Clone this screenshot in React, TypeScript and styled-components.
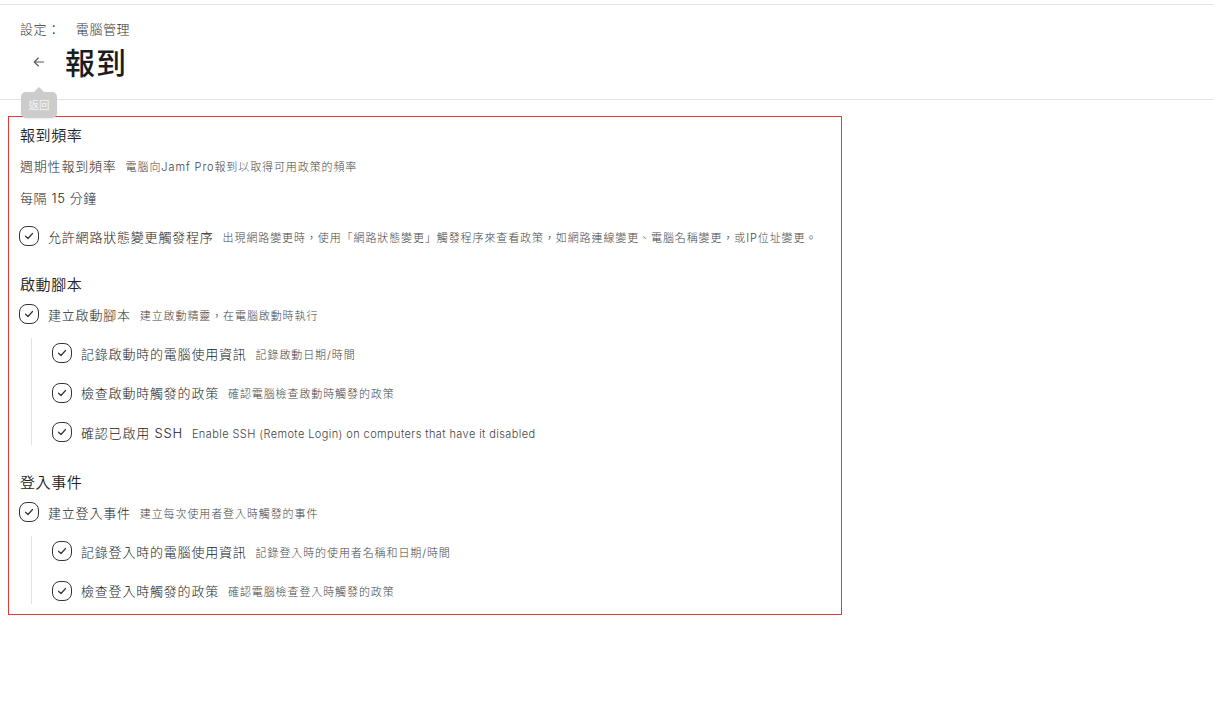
import React from "react";
import styled, { createGlobalStyle } from "styled-components";

const GlobalStyle = createGlobalStyle`
  html, body { margin: 0; padding: 0; background: #ffffff; }
  body {
    font-family: Inter, "Noto Sans CJK TC", "Noto Sans", sans-serif;
    color: #222222;
  }
  * { box-sizing: border-box; }
`;

const Page = styled.div`
  width: 1214px;
  min-height: 728px;
  padding-top: 4px;
`;

const Header = styled.header`
  border-top: 1px solid #e3e3e3;
  border-bottom: 1px solid #e3e3e3;
  padding: 15px 20px 18px;
  height: 96px;
`;

const Breadcrumb = styled.div`
  display: flex;
  align-items: center;
  gap: 15px;
  font-size: 13px;
  font-weight: 300;
  letter-spacing: 0.6px;
  line-height: 18px;
  color: #333333;
`;

const TitleRow = styled.div`
  display: flex;
  align-items: center;
  height: 40px;
  margin-top: 3px;
  gap: 14px;
  padding-left: 7px;
`;

const BackButton = styled.button`
  position: relative;
  width: 24px;
  height: 24px;
  padding: 0;
  margin-top: 2px;
  border: none;
  background: transparent;
  display: flex;
  align-items: center;
  justify-content: center;
  color: #555555;
  cursor: pointer;
`;

const Tooltip = styled.span`
  position: absolute;
  top: 42px;
  left: 50%;
  transform: translateX(-50%);
  width: 36px;
  height: 26px;
  border-radius: 5px;
  background: #cccccc;
  color: #f4f4f4;
  font-family: "Noto Sans CJK TC", sans-serif;
  font-size: 10.5px;
  line-height: 26px;
  text-align: center;
  box-shadow: 0 1px 2px rgba(0, 0, 0, 0.08);
  z-index: 2;
  &::before {
    content: "";
    position: absolute;
    top: -5px;
    left: 50%;
    margin-left: -5px;
    border-left: 5px solid transparent;
    border-right: 5px solid transparent;
    border-bottom: 5px solid #cccccc;
  }
`;

const Title = styled.h1`
  margin: 0;
  font-family: "Noto Sans CJK TC", sans-serif;
  font-size: 30px;
  font-weight: 500;
  line-height: 40px;
  color: #1c1c1c;
  letter-spacing: 1px;
`;

const Content = styled.main`
  padding: 16px 372px 0 8px;
`;

const Panel = styled.section`
  border: 1px solid #e53935;
  padding: 7px 11px 10px;
  display: flex;
  flex-direction: column;
`;

const SectionTitle = styled.h2<{ $gap?: number }>`
  margin: ${(p) => p.$gap ?? 0}px 0 0;
  font-family: "Noto Sans CJK TC", sans-serif;
  font-size: 15px;
  font-weight: 350;
  line-height: 22px;
  color: #222222;
  letter-spacing: 0.6px;
`;

const FieldLine = styled.div<{ $gap: number }>`
  margin-top: ${(p) => p.$gap}px;
  display: flex;
  align-items: baseline;
  gap: 9px;
  line-height: 20px;
`;

const Label = styled.span`
  font-size: 13px;
  font-weight: 300;
  color: #222222;
  letter-spacing: 0.8px;
`;

const Desc = styled.span<{ $latin?: boolean }>`
  font-size: 11px;
  font-weight: 300;
  color: #444444;
  letter-spacing: ${(p) => (p.$latin ? "0.4px" : "0.9px")};
`;

const Value = styled.div<{ $gap: number }>`
  margin-top: ${(p) => p.$gap}px;
  font-size: 13px;
  font-weight: 300;
  line-height: 20px;
  letter-spacing: 0.6px;
  color: #222222;
`;

const CheckRow = styled.div<{ $gap?: number }>`
  margin-top: ${(p) => p.$gap ?? 0}px;
  display: flex;
  align-items: center;
  height: 26px;
  gap: 9px;
  white-space: nowrap;
`;

const CheckBox = styled.span`
  width: 20px;
  height: 20px;
  flex: none;
  border: 1.3px solid #333333;
  border-radius: 8px;
  display: flex;
  align-items: center;
  justify-content: center;
  color: #333333;
  margin-left: -1px;
`;

const RowText = styled.span`
  display: flex;
  align-items: baseline;
  gap: 9px;
`;

const Nested = styled.div<{ $gap: number }>`
  margin: ${(p) => p.$gap}px 0 0 11px;
  padding: 2px 0 0 21px;
  border-left: 1px solid #e2e2e2;
  display: flex;
  flex-direction: column;
  gap: 13.5px;
`;

const Check = () => (
  <CheckBox>
    <svg width="10" height="8" viewBox="0 0 10 8" fill="none">
      <path d="M1.5 4.2 L4 6.5 L8.5 1.5" stroke="currentColor" strokeWidth="1.2" strokeLinecap="round" strokeLinejoin="round" />
    </svg>
  </CheckBox>
);

type Item = { label: string; desc: string; latin?: boolean };

const Option = ({ label, desc, latin, gap }: Item & { gap?: number }) => (
  <CheckRow $gap={gap}>
    <Check />
    <RowText>
      <Label>{label}</Label>
      <Desc $latin={latin}>{desc}</Desc>
    </RowText>
  </CheckRow>
);

const startupItems: Item[] = [
  { label: "記錄啟動時的電腦使用資訊", desc: "記錄啟動日期/時間" },
  { label: "檢查啟動時觸發的政策", desc: "確認電腦檢查啟動時觸發的政策" },
  { label: "確認已啟用 SSH", desc: "Enable SSH (Remote Login) on computers that have it disabled", latin: true },
];

const loginItems: Item[] = [
  { label: "記錄登入時的電腦使用資訊", desc: "記錄登入時的使用者名稱和日期/時間" },
  { label: "檢查登入時觸發的政策", desc: "確認電腦檢查登入時觸發的政策" },
];

export default function App() {
  return (
    <Page>
      <GlobalStyle />
      <Header>
        <Breadcrumb>
          <span>設定：</span>
          <span>電腦管理</span>
        </Breadcrumb>
        <TitleRow>
          <BackButton aria-label="返回">
            <svg width="16" height="16" viewBox="0 0 24 24" fill="none" stroke="currentColor" strokeWidth="1.6" strokeLinecap="round" strokeLinejoin="round">
              <path d="M19 12H5" />
              <path d="M11 18l-6-6 6-6" />
            </svg>
            <Tooltip>返回</Tooltip>
          </BackButton>
          <Title>報到</Title>
        </TitleRow>
      </Header>
      <Content>
        <Panel>
          <SectionTitle>報到頻率</SectionTitle>
          <FieldLine $gap={10}>
            <Label>週期性報到頻率</Label>
            <Desc>電腦向Jamf Pro報到以取得可用政策的頻率</Desc>
          </FieldLine>
          <Value $gap={11}>每隔 15 分鐘</Value>
          <Option
            gap={15}
            label="允許網路狀態變更觸發程序"
            desc="出現網路變更時，使用「網路狀態變更」觸發程序來查看政策，如網路連線變更、電腦名稱變更，或IP位址變更。"
          />

          <SectionTitle $gap={24}>啟動腳本</SectionTitle>
          <Option gap={6} label="建立啟動腳本" desc="建立啟動精靈，在電腦啟動時執行" />
          <Nested $gap={11}>
            {startupItems.map((it) => (
              <Option key={it.label} {...it} />
            ))}
          </Nested>

          <SectionTitle $gap={26}>登入事件</SectionTitle>
          <Option gap={6} label="建立登入事件" desc="建立每次使用者登入時觸發的事件" />
          <Nested $gap={11}>
            {loginItems.map((it) => (
              <Option key={it.label} {...it} />
            ))}
          </Nested>
        </Panel>
      </Content>
    </Page>
  );
}
